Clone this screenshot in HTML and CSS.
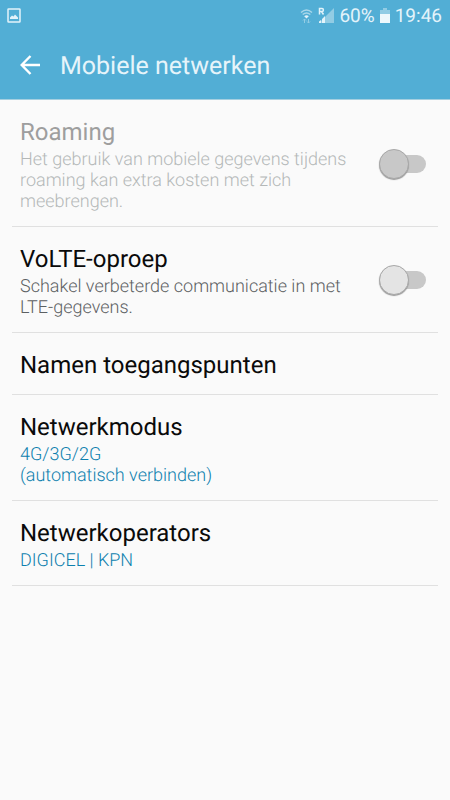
FILE: index.html
```html
<!DOCTYPE html>
<html lang="nl">
<head>
<meta charset="utf-8">
<meta name="viewport" content="width=device-width, initial-scale=1">
<title>Mobiele netwerken</title>
<link rel="stylesheet" href="styles.css">
</head>
<body>
<header class="top">
  <div class="status">
    <svg class="photo" width="14" height="15" viewBox="0 0 14 15" aria-hidden="true">
      <rect x="1" y="1" width="12" height="13" rx="0.6" fill="none" stroke="#e3f3fa" stroke-width="1.5"/>
      <path d="M3 11V9.500l2-2 1.500 1 1.500-2 3 3V11z" fill="#e3f3fa"/>
    </svg>
    <div class="indicators">
      <svg width="13" height="16" viewBox="0 0 13 16" fill="none" aria-hidden="true">
        <path d="M1 4.500Q6.500-.5 12 4.500M2.700 6.500q3.800-3.200 7.600 0" stroke="#a9d7ea" stroke-width="1.400"/>
        <path d="M4.200 8.200q2.300-1.900 4.600 0L6.500 10.500z" fill="#e3f3fa"/>
        <path d="M4.500 15v-4M3 12.500l1.500-1.500L6 12.500M8.500 11v4M7 13.500L8.500 15l1.500-1.500" stroke="#93cde5"/>
      </svg>
      <svg class="signal" width="16" height="17" viewBox="0 0 16 17" aria-hidden="true">
        <path d="M16 1v15H1z" fill="#92cce4"/>
        <path d="M0 0h7v9H0z" fill="#52aed5"/>
        <path d="M1.500 7.500V1.500H4q1.400 0 1.400 1.500T4 4.500H1.500M3.500 4.500l2 3" fill="none" stroke="#e3f3fa" stroke-width="1.500"/>
        <path d="M1 16v-1.500L3 13v3zM4 16v-4l3-3v7z" fill="#e3f3fa"/>
      </svg>
      <span class="percent">60%</span>
      <svg class="battery" width="10" height="15" viewBox="0 0 10 15" aria-hidden="true">
        <path d="M0 2h3V0h4v2h3v5H0z" fill="#92cce4"/>
        <path d="M0 6h10v9H0z" fill="#eef8fc"/>
      </svg>
      <time>19:46</time>
    </div>
  </div>
  <div class="bar">
    <button class="back" type="button" aria-label="Terug">
      <svg width="20" height="20" viewBox="0 0 20 20" fill="none" stroke="#fff" stroke-width="2.400" aria-hidden="true">
        <path d="M20 10H2M10.500 1L1.700 10l8.800 9"/>
      </svg>
    </button>
    <h1>Mobiele netwerken</h1>
  </div>
</header>
<main class="list">
  <section class="row disabled">
    <label class="text" for="roaming">
      <span class="title">Roaming</span>
      <span class="detail">Het gebruik van mobiele gegevens tijdens roaming kan extra kosten met zich meebrengen.</span>
    </label>
    <input class="switch" id="roaming" type="checkbox" role="switch" disabled>
  </section>
  <section class="row">
    <label class="text" for="volte">
      <span class="title">VoLTE-oproep</span>
      <span class="detail">Schakel verbeterde communicatie in met LTE-gegevens.</span>
    </label>
    <input class="switch" id="volte" type="checkbox" role="switch">
  </section>
  <button class="row single" type="button">
    <span class="title">Namen toegangspunten</span>
  </button>
  <button class="row" type="button">
    <span class="text">
      <span class="title">Netwerkmodus</span>
      <span class="detail value">4G/3G/2G<br>(automatisch verbinden)</span>
    </span>
  </button>
  <button class="row" type="button">
    <span class="text">
      <span class="title">Netwerkoperators</span>
      <span class="detail value">DIGICEL | KPN</span>
    </span>
  </button>
</main>
</body>
</html>
```

FILE: styles.css
```css
* {
  box-sizing: border-box;
}

body {
  margin: 0;
  background: #fafafa;
  color: #0a0a0a;
  font-family: Roboto, "Liberation Sans", sans-serif;
  text-rendering: geometricPrecision;
}

button {
  margin: 0;
  padding: 0;
  border: 0;
  background: none;
  color: inherit;
  font: inherit;
  text-align: left;
  text-rendering: inherit;
}

svg {
  display: block;
}

.top {
  background: #52aed5;
  border-bottom: 1px solid #a5cfe0;
}

.status {
  display: flex;
  align-items: center;
  justify-content: space-between;
  height: 31px;
  padding: 0 8px 0 7px;
  color: #e3f3fa;
  font-size: 19px;
  line-height: 30px;
}

.indicators {
  display: flex;
  align-items: center;
  gap: 5px;
}

.bar {
  display: flex;
  align-items: center;
  gap: 20px;
  height: 68px;
  padding: 0 20px;
}

h1 {
  margin: 0;
  padding-top: 4px;
  color: #e6f4fa;
  font-size: 25px;
  font-weight: 400;
  line-height: 32px;
}

.list {
  padding: 0 12px;
}

.row {
  display: flex;
  align-items: center;
  justify-content: space-between;
  width: 100%;
  padding: 15px 12px 14px 8px;
  border-bottom: 1px solid #e0e0e0;
}

.single {
  padding-bottom: 12px;
}

.text {
  flex: 0 1 335px;
}

.title,
.detail {
  display: block;
}

.title {
  font-size: 24px;
  line-height: 34px;
}

.detail {
  color: #5c6062;
  font-size: 18px;
  font-weight: 300;
  line-height: 21px;
}

.value {
  color: #0d80ae;
}

.disabled .title {
  color: #9e9e9e;
}

.disabled .detail {
  color: #b4b8b8;
}

.switch {
  appearance: none;
  display: flex;
  align-items: center;
  flex: none;
  width: 40px;
  height: 18px;
  margin: 0;
  border-radius: 9px;
  background: #c8c8c8;
}

.switch::before {
  content: "";
  width: 28px;
  height: 28px;
  margin-left: -7px;
  flex: none;
  border: 1px solid #a8a8a8;
  border-radius: 50%;
  background: #e4e4e4;
  box-shadow: 0 1px 1px #999;
}

.switch:disabled::before {
  background: #c8c8c8;
}
```
